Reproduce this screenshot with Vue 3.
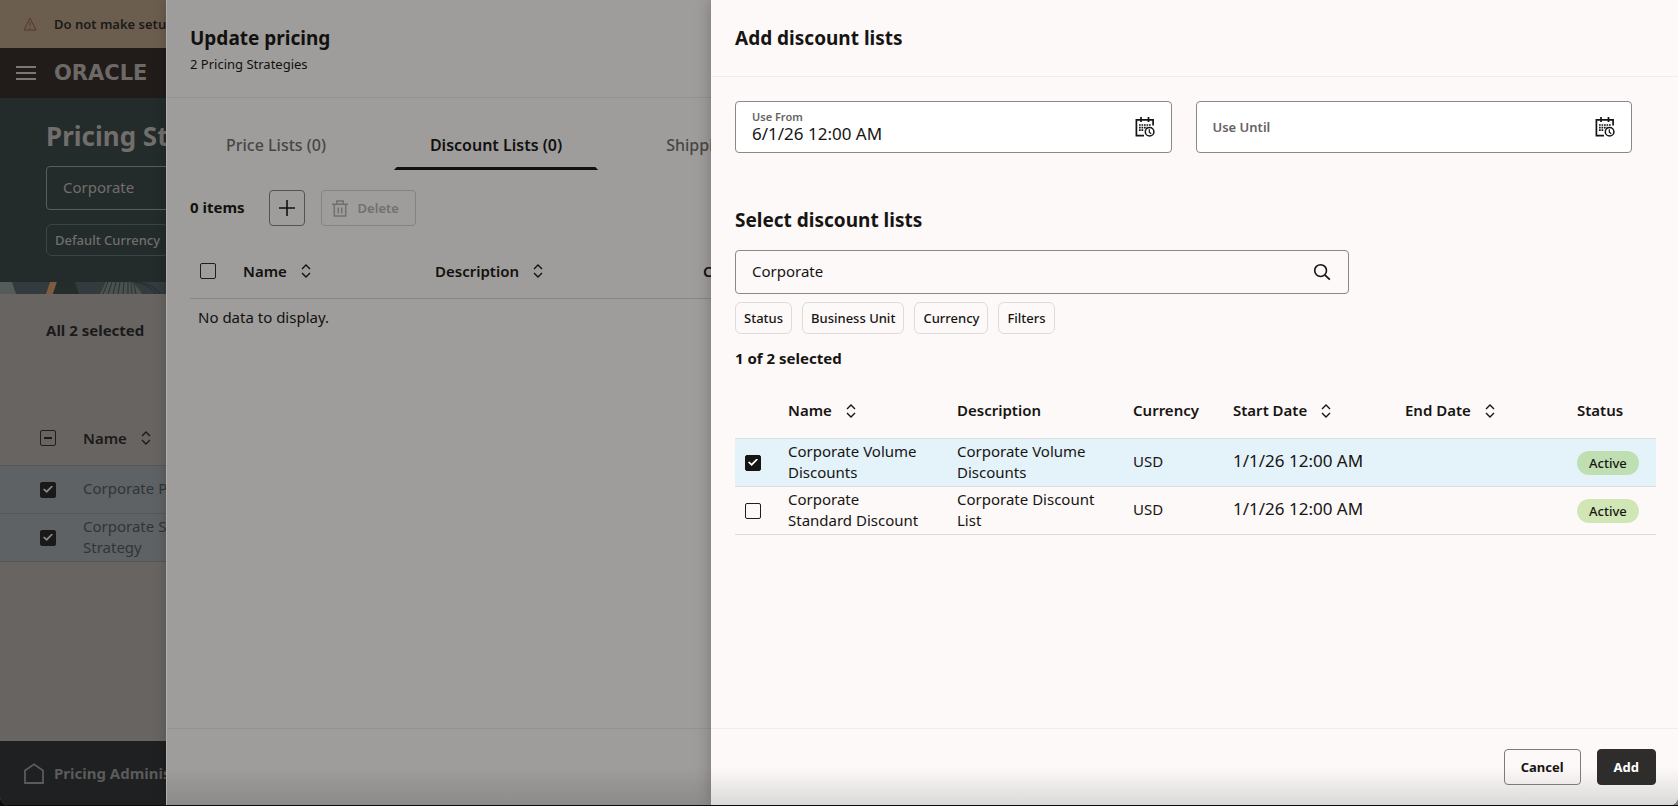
<script setup>
import { ref } from 'vue'

const tabs = ref([
  { label: 'Price Lists (0)', active: false },
  { label: 'Discount Lists (0)', active: true },
  { label: 'Shipping', active: false },
])

const useFrom = ref('6/1/26 12:00 AM')
const useUntil = ref('')
const search = ref('Corporate')
const pageSearch = ref('Corporate')

const chips = ['Status', 'Business Unit', 'Currency', 'Filters']

const columns = [
  { label: 'Name', sortable: true },
  { label: 'Description', sortable: false },
  { label: 'Currency', sortable: false },
  { label: 'Start Date', sortable: true },
  { label: 'End Date', sortable: true },
  { label: 'Status', sortable: false },
]

const rows = ref([
  { name: 'Corporate Volume Discounts', description: 'Corporate Volume Discounts', currency: 'USD', start: '1/1/26 12:00 AM', end: '', status: 'Active', selected: true },
  { name: 'Corporate Standard Discount', description: 'Corporate Discount List', currency: 'USD', start: '1/1/26 12:00 AM', end: '', status: 'Active', selected: false },
])

const strategies = ref([
  { lines: ['Corporate Pr'], selected: true },
  { lines: ['Corporate St', 'Strategy'], selected: true },
])
</script>

<template>
  <div class="stage">
    <!-- Pricing strategies page -->
    <div class="page">
      <div class="banner">
        <svg class="warn" width="14" height="14" viewBox="0 0 14 14" fill="none">
          <path d="M7 1.2 13 13H1Z" stroke="currentColor" />
          <path d="M7 5v4M7 10.4v1.2" stroke="currentColor" />
        </svg>
        <strong>Do not make setup</strong>
      </div>
      <div class="topbar">
        <button class="bare" aria-label="Menu">
          <svg width="20" height="14" viewBox="0 0 20 14"><path d="M0 1h20M0 7h20M0 13h20" stroke="currentColor" stroke-width="2" /></svg>
        </button>
        <span class="brand">ORACLE</span>
      </div>
      <div class="hero">
        <h1>Pricing Str</h1>
        <input v-model="pageSearch" class="hero-input" aria-label="Search pricing strategies" />
        <button class="hero-chip">Default Currency</button>
      </div>
      <svg class="strip" width="166" height="12" viewBox="0 0 166 12">
        <rect width="166" height="12" fill="#333b3e" />
        <path d="M0 0h12l4 12H0Z" fill="#555b59" />
        <path d="M50 0h7l-4 12h-7Z" fill="#7d5a40" />
        <path d="M57 0h18l4 12H53Z" fill="#252c2c" />
        <path d="M106 0h24q8 4 12 12h-42Z" fill="#4b514f" />
        <path d="M108 0l-5 12M112 0l-4 12M116 0l-3 12M120 0l-2 12M124 0l-1 12M128 0v12M131 1l1 11M134 3l2 9" stroke="#2a3133" fill="none" />
        <path d="M134 0q14 2 22 12M140 0q14 3 20 12" stroke="#262d2f" fill="none" />
      </svg>
      <div class="page-body">
        <div class="page-count">All 2 selected</div>
        <table class="grid page-grid">
          <colgroup><col class="pc-check" /><col class="pc-name" /></colgroup>
          <thead>
            <tr>
              <th class="check"><input type="checkbox" class="box mixed" aria-label="Select all strategies" /></th>
              <th>
                <span class="head">Name
                  <button class="bare" aria-label="Sort by name"><svg width="10" height="14" viewBox="0 0 10 14" fill="none"><path d="M1 5l4-4 4 4M1 9l4 4 4-4" stroke="currentColor" stroke-width="1.4" /></svg></button>
                </span>
              </th>
            </tr>
          </thead>
          <tbody>
            <tr v-for="s in strategies" :key="s.lines[0]">
              <td class="check"><input v-model="s.selected" type="checkbox" class="box" :aria-label="s.lines.join(' ')" /></td>
              <td><div v-for="l in s.lines" :key="l">{{ l }}</div></td>
            </tr>
          </tbody>
        </table>
      </div>
      <div class="taskbar">
        <svg width="20" height="21" viewBox="0 0 20 21" fill="none"><path d="M1 7.5 10 1.3l9 6.2V20H1Z" stroke="currentColor" stroke-width="1.8" /></svg>
        <span>Pricing Adminis</span>
      </div>
    </div>

    <!-- Update pricing drawer -->
    <section class="drawer drawer-back">
      <header>
        <h2>Update pricing</h2>
        <p>2 Pricing Strategies</p>
      </header>
      <div class="body">
        <nav class="tabs">
          <button v-for="t in tabs" :key="t.label" :class="['tab', { active: t.active }]">{{ t.label }}</button>
        </nav>
        <div class="tools">
          <span class="items">0 items</span>
          <button class="btn icon-only" aria-label="Add">
            <svg width="16" height="16" viewBox="0 0 16 16"><path d="M8 0v16M0 8h16" stroke="currentColor" stroke-width="1.6" /></svg>
          </button>
          <button class="btn delete" disabled>
            <svg width="16" height="17" viewBox="0 0 16 17" fill="none">
              <path d="M0 4.2h16M4.8 4V.9h6.4V4M2.3 4.5v11.6h11.4V4.5M6.3 7.5v6M9.7 7.5v6" stroke="currentColor" stroke-width="1.5" />
            </svg>
            Delete
          </button>
        </div>
        <table class="grid back-grid">
          <colgroup><col class="bc-check" /><col class="bc-name" /><col class="bc-desc" /><col /></colgroup>
          <thead>
            <tr>
              <th class="check"><input type="checkbox" class="box" aria-label="Select all discount lists" /></th>
              <th v-for="c in ['Name', 'Description', 'Currency']" :key="c">
                <span class="head">{{ c }}
                  <button class="bare" :aria-label="'Sort by ' + c"><svg width="10" height="14" viewBox="0 0 10 14" fill="none"><path d="M1 5l4-4 4 4M1 9l4 4 4-4" stroke="currentColor" stroke-width="1.4" /></svg></button>
                </span>
              </th>
            </tr>
          </thead>
          <tbody>
            <tr><td colspan="4" class="empty">No data to display.</td></tr>
          </tbody>
        </table>
      </div>
      <footer></footer>
    </section>

    <!-- Add discount lists drawer -->
    <section class="drawer drawer-front">
      <header><h2>Add discount lists</h2></header>
      <div class="body">
        <div class="fields">
          <div class="field">
            <div class="field-text">
              <label for="use-from">Use From</label>
              <input id="use-from" v-model="useFrom" />
            </div>
            <button class="bare" aria-label="Pick start date and time">
              <svg width="20" height="20" viewBox="0 0 20 20" fill="none">
                <path d="M18.1 8.5V2.8H1.4v15.8H9" stroke="currentColor" stroke-width="1.7" />
                <path d="M6 0v5M13.5 0v5" stroke="currentColor" stroke-width="1.7" />
                <path d="M4 8h12M4 10.6h8.5M4 13.2h4.8" stroke="currentColor" stroke-width="1.7" stroke-dasharray="1.7 .8" />
                <circle cx="14.6" cy="14.8" r="4.3" stroke="currentColor" stroke-width="1.5" />
                <path d="M14.3 12.2v2.9l1.9 1.6" stroke="currentColor" stroke-width="1.2" />
              </svg>
            </button>
          </div>
          <div class="field blank">
            <div class="field-text">
              <label for="use-until">Use Until</label>
              <input id="use-until" v-model="useUntil" />
            </div>
            <button class="bare" aria-label="Pick end date and time">
              <svg width="20" height="20" viewBox="0 0 20 20" fill="none">
                <path d="M18.1 8.5V2.8H1.4v15.8H9" stroke="currentColor" stroke-width="1.7" />
                <path d="M6 0v5M13.5 0v5" stroke="currentColor" stroke-width="1.7" />
                <path d="M4 8h12M4 10.6h8.5M4 13.2h4.8" stroke="currentColor" stroke-width="1.7" stroke-dasharray="1.7 .8" />
                <circle cx="14.6" cy="14.8" r="4.3" stroke="currentColor" stroke-width="1.5" />
                <path d="M14.3 12.2v2.9l1.9 1.6" stroke="currentColor" stroke-width="1.2" />
              </svg>
            </button>
          </div>
        </div>

        <h3>Select discount lists</h3>
        <div class="search">
          <input v-model="search" aria-label="Search discount lists" />
          <button class="bare" aria-label="Search">
            <svg width="18" height="18" viewBox="0 0 18 18" fill="none"><circle cx="7.6" cy="7.6" r="5.9" stroke="currentColor" stroke-width="1.6" /><path d="m11.8 11.8 5 4.8" stroke="currentColor" stroke-width="1.8" /></svg>
          </button>
        </div>
        <div class="chips">
          <button v-for="c in chips" :key="c" class="chip">{{ c }}</button>
        </div>
        <div class="count">1 of 2 selected</div>

        <table class="grid front-grid">
          <colgroup>
            <col class="fc-check" /><col class="fc-name" /><col class="fc-desc" /><col class="fc-cur" /><col class="fc-date" /><col class="fc-date" /><col class="fc-status" />
          </colgroup>
          <thead>
            <tr>
              <th></th>
              <th v-for="c in columns" :key="c.label">
                <span class="head">{{ c.label }}
                  <button v-if="c.sortable" class="bare" :aria-label="'Sort by ' + c.label"><svg width="10" height="14" viewBox="0 0 10 14" fill="none"><path d="M1 5l4-4 4 4M1 9l4 4 4-4" stroke="currentColor" stroke-width="1.4" /></svg></button>
                </span>
              </th>
            </tr>
          </thead>
          <tbody>
            <tr v-for="r in rows" :key="r.name" :class="{ selected: r.selected }">
              <td class="check"><input v-model="r.selected" type="checkbox" class="box" :aria-label="r.name" /></td>
              <td class="name">{{ r.name }}</td>
              <td class="description">{{ r.description }}</td>
              <td>{{ r.currency }}</td>
              <td class="date">{{ r.start }}</td>
              <td class="date">{{ r.end }}</td>
              <td class="state"><span class="badge">{{ r.status }}</span></td>
            </tr>
          </tbody>
        </table>
      </div>
      <footer>
        <button class="btn cancel">Cancel</button>
        <button class="btn primary">Add</button>
      </footer>
    </section>
  </div>
</template>

<style>
body {
  margin: 0;
  background: #0c0c0c;
}
</style>

<style scoped>
.stage {
  --ink: #161513;
  --line: #dedbda;
  box-sizing: border-box;
  display: grid;
  grid-template-columns: 166px 545px minmax(0, 1fr);
  grid-template-rows: minmax(calc(100vh - 1px), auto);
  padding-bottom: 1px;
  overflow: hidden;
  font-family: "Noto Sans", "Open Sans", sans-serif;
  font-size: 15px;
  line-height: 21px;
  color: var(--ink);
}
.stage *,
.stage *::before,
.stage *::after {
  box-sizing: border-box;
}
h1, h2, h3, p {
  margin: 0;
}
button, input {
  font: inherit;
  color: inherit;
}
button {
  cursor: pointer;
}
svg {
  display: block;
  flex: none;
}
.bare {
  padding: 0;
  border: 0;
  background: none;
}
strong {
  font-weight: 600;
}

/* Background page */
.page {
  grid-area: 1 / 1 / 2 / -1;
  display: flex;
  flex-direction: column;
  overflow: hidden;
  white-space: nowrap;
  background: #686462;
  border-bottom-left-radius: 8px;
}
.banner {
  display: flex;
  align-items: center;
  gap: 17px;
  height: 48px;
  padding-left: 23px;
  font-size: 13px;
  background: #6b5e4e;
  color: #1b1a19;
}
.warn {
  color: #5a3426;
}
.topbar {
  display: flex;
  align-items: center;
  gap: 18px;
  height: 50px;
  padding-left: 16px;
  background: #211c19;
  color: #7b7775;
}
.brand {
  font-family: "DejaVu Sans", sans-serif;
  font-size: 21px;
  font-weight: 700;
  color: #6d6967;
}
.hero {
  display: flex;
  flex-direction: column;
  align-items: flex-start;
  height: 184px;
  padding: 20px 46px 0;
  background: #232b2b;
  color: #726e6c;
}
.hero h1 {
  font-size: 26px;
  line-height: 36px;
  font-weight: 700;
}
.hero-input {
  width: 100%;
  height: 44px;
  margin-top: 12px;
  padding: 0 16px 2px;
  border: 1px solid #5a5d5c;
  border-radius: 4px;
  background: none;
}
.hero-chip {
  height: 32px;
  margin-top: 14px;
  padding: 0 8px;
  border: 1px solid #3d4444;
  border-radius: 6px;
  background: none;
  font-size: 13px;
  font-weight: 500;
}
.strip {
  height: 12px;
}
.page-body {
  flex: 1;
  color: #1b1a19;
}
.page-count {
  padding: 26px 46px 0;
  font-weight: 700;
}
.page-grid {
  margin-top: 70px;
  color: #2e3635;
}
.page-grid .pc-check { width: 83px; }
.page-grid thead th { color: #1b1a19; height: 55px; border-bottom-color: #565655; }
.page-grid tbody td {
  background: #5f6265;
  border-bottom-color: #545758;
}
.page-grid .check { padding-left: 40px; }
.page-grid .box { --ink: #1a1918; --tick: #85898c; }
.taskbar {
  display: flex;
  align-items: center;
  gap: 10px;
  height: 64px;
  padding-left: 24px;
  background: #1e2022;
  color: #5b5b5a;
  font-weight: 700;
}

/* Drawers */
.drawer {
  display: flex;
  flex-direction: column;
  min-width: 0;
}
.drawer header {
  padding: 24px 24px 0;
  border-bottom: 1px solid var(--rule);
}
.drawer h2,
.drawer h3 {
  font-size: 19px;
  line-height: 28px;
  font-weight: 700;
}
.drawer .body {
  flex: 1;
}
.drawer footer {
  display: flex;
  justify-content: flex-end;
  gap: 16px;
  height: 77px;
  padding: 20px 22px 0 24px;
  border-top: 1px solid var(--rule);
}
.drawer-back {
  --rule: #939290;
  --line: #878684;
  grid-area: 1 / 2 / 2 / -1;
  background: #9e9d9b;
  border-left: 1px solid #b0afad;
  box-shadow: 0 0 12px rgba(0, 0, 0, 0.2);
  color: #12110f;
}
.drawer-back header {
  height: 98px;
  padding-left: 23px;
}
.drawer-back header p {
  margin-top: 2px;
  font-size: 13px;
}
.drawer-back .body {
  padding: 24px 23px 0;
}
.drawer-back footer {
  background: linear-gradient(#9e9d9b 50%, #8c8b89);
}
.tabs {
  display: flex;
  gap: 32px;
  height: 48px;
}
.tab {
  position: relative;
  padding: 0 36px 2px;
  border: 0;
  background: none;
  font-size: 16px;
  font-weight: 500;
  color: #484644;
  white-space: nowrap;
}
.tab.active {
  font-weight: 600;
  color: #12110f;
}
.tab.active::after {
  content: "";
  position: absolute;
  inset: auto 0 0;
  height: 3px;
  background: #12110f;
  clip-path: polygon(3px 0, calc(100% - 3px) 0, 100% 100%, 0 100%);
}
.tools {
  display: flex;
  align-items: center;
  margin-top: 20px;
}
.items {
  padding-bottom: 2px;
  font-weight: 700;
}
.btn {
  display: flex;
  align-items: center;
  justify-content: center;
  height: 36px;
  border: 1px solid #7d7b78;
  border-radius: 4px;
  background: none;
  font-size: 13px;
  font-weight: 700;
}
.btn.icon-only {
  width: 36px;
  margin: 0 16px 0 24px;
  padding: 0;
  border-color: #55534f;
}
.btn.delete {
  gap: 10px;
  padding: 0 16px 0 10px;
  border-color: #858381;
  color: #72706e;
  font-weight: 600;
}

/* Tables */
.grid {
  width: 100%;
  table-layout: fixed;
  border-collapse: separate;
  border-spacing: 0;
}
.grid th,
.grid td {
  height: 48px;
  padding: 0 0 2px;
  text-align: left;
  vertical-align: middle;
  border-bottom: 1px solid var(--line);
  font-weight: 400;
}
.grid th {
  padding-bottom: 0;
  font-weight: 600;
}
.grid .check,
.grid .state {
  padding-bottom: 0;
}
.head {
  display: flex;
  align-items: center;
  gap: 14px;
  white-space: nowrap;
}
.box {
  appearance: none;
  display: block;
  width: 16px;
  height: 16px;
  margin: 0;
  border: 1px solid #1f1e1c;
  border-radius: 2px;
  background: none;
}
.box:checked {
  display: grid;
  place-items: center;
  border-color: var(--ink);
  background: var(--ink);
}
.box:checked::after {
  content: "";
  width: 10px;
  height: 8px;
  background: var(--tick, #fff);
  clip-path: polygon(0 50%, 13% 36%, 36% 62%, 86% 0, 100% 14%, 37% 94%);
}
.box.mixed {
  display: grid;
  place-items: center;
}
.box.mixed::after {
  content: "";
  width: 8px;
  height: 2px;
  background: #1b1a19;
}
.back-grid {
  margin-top: 18px;
}
.back-grid th { height: 55px; }
.back-grid .check { padding-left: 10px; }
.back-grid .bc-check { width: 53px; }
.back-grid .bc-name { width: 192px; }
.back-grid .bc-desc { width: 268px; }
.grid td.empty {
  height: 38px;
  padding-left: 8px;
  border-bottom: 0;
}

/* Front drawer */
.drawer-front {
  --rule: #f0edec;
  grid-area: 1 / 3 / 2 / -1;
  z-index: 1;
  background: #fdf9f8;
  box-shadow: 0 0 16px rgba(0, 0, 0, 0.25);
  border-bottom-right-radius: 8px;
}
.drawer-front header {
  height: 77px;
}
.drawer-front .body {
  padding: 24px 22px 24px 24px;
}
.drawer-front footer {
  background: linear-gradient(rgba(220, 219, 218, 0) 50%, #dbdad9);
  border-bottom-right-radius: 8px;
}
.fields {
  display: grid;
  grid-template-columns: 1fr 1fr;
  gap: 24px;
  padding-right: 24px;
}
.field {
  display: flex;
  align-items: center;
  height: 52px;
  padding: 0 16px;
  border: 1px solid #8b8987;
  border-radius: 4px;
  background: #fff;
}
.field-text {
  flex: 1;
  display: flex;
  flex-direction: column;
}
.field label {
  font-size: 11px;
  line-height: 14px;
  font-weight: 600;
  color: #66625f;
}
.field input {
  width: 100%;
  height: 20px;
  padding: 0 0 2px;
  border: 0;
  outline: 0;
  background: none;
  font-size: 17px;
}
.field.blank .field-text {
  display: grid;
  align-items: center;
}
.field.blank label,
.field.blank input {
  grid-area: 1 / 1;
}
.field.blank label {
  font-size: 13px;
  line-height: 18px;
}
.drawer-front h3 {
  margin-top: 53px;
}
.search {
  display: flex;
  align-items: center;
  width: calc(100% * 2 / 3);
  height: 44px;
  margin-top: 16px;
  padding: 0 17px 0 16px;
  border: 1px solid #8b8987;
  border-radius: 4px;
}
.search input {
  flex: 1;
  min-width: 0;
  padding: 0 0 2px;
  border: 0;
  outline: 0;
  background: none;
}
.chips {
  display: flex;
  gap: 10px;
  margin-top: 8px;
}
.chip {
  height: 32px;
  padding: 0 8px;
  border: 1px solid var(--line);
  border-radius: 6px;
  background: none;
  font-size: 13px;
  font-weight: 500;
}
.count {
  margin-top: 14px;
  font-weight: 700;
}
.front-grid {
  margin-top: 14px;
}
.front-grid th { height: 56px; }
.front-grid .check { padding-left: 10px; }
.front-grid td.name { padding-right: 32px; }
.front-grid td.description { padding-right: 24px; }
.front-grid td.date {
  padding-bottom: 4px;
  font-size: 17px;
  white-space: nowrap;
}
.fc-check { width: 53px; }
.fc-name { width: 169px; }
.fc-desc { width: 176px; }
.fc-cur { width: 100px; }
.fc-date { width: 172px; }
.fc-status { width: 79px; }
.selected td {
  background: #e4f2f9;
}
.badge {
  display: inline-block;
  padding: 0 12px;
  border-radius: 12px;
  background: #d1e6b5;
  font-size: 13px;
  line-height: 24px;
  font-weight: 500;
  vertical-align: middle;
}
.selected .badge {
  background: #bfdfb3;
}
.btn.cancel {
  padding: 0 16px;
}
.btn.primary {
  padding: 0 16px;
  border-color: #2e2d2b;
  background: #2e2d2b;
  color: #fff;
}
</style>
